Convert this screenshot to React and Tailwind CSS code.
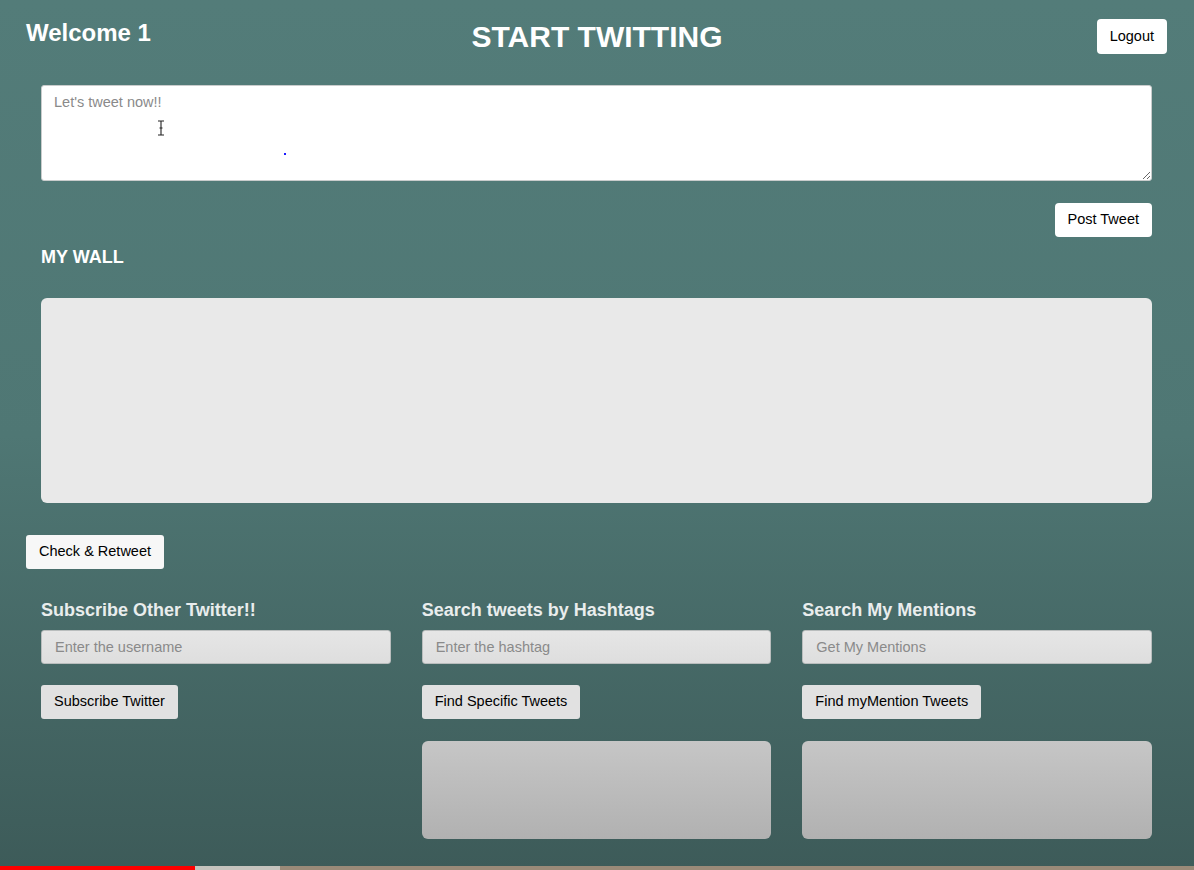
import React from 'react';

const Column = ({ title, placeholder, button, showResults }) => {
    return (
        <div className="flex flex-col">
            <h3 className="text-lg leading-7 font-bold text-[#e9eded]">{title}</h3>
            <input
                type="text"
                placeholder={placeholder}
                className="mt-[6px] h-[34px] w-full rounded-[3px] border border-[#b9bdbd] bg-linear-to-b from-[#e6e6e6] to-[#dedede] px-[13px] text-[14.5px] text-black outline-none placeholder:text-[#8a8a8a]"
            />
            <div className="mt-[21px]">
                <button className="h-[34px] rounded-[3px] bg-[#e1e1e1] px-[13px] text-[14.5px] text-black">
                    {button}
                </button>
            </div>
            {showResults && (
                <div className="mt-[22px] h-[98px] rounded-md bg-linear-to-b from-[#c6c6c6] to-[#b1b1b1]" />
            )}
        </div>
    );
};

const App = () => {
    return (
        <div className="relative min-h-screen overflow-hidden bg-linear-to-b from-[#537c79] via-[#4f7774] to-[#3d5b59] px-[26px] font-['Liberation_Sans',Arial,sans-serif]">
            {/* header */}
            <header className="mt-[19px] grid h-[35px] grid-cols-[1fr_auto_1fr] items-center">
                <h2 className="self-start text-2xl leading-7 font-bold text-white">Welcome 1</h2>
                <h1 className="text-[30px] leading-[35px] font-bold text-white">START TWITTING</h1>
                <div className="flex justify-end pr-[1px]">
                    <button className="h-[35px] rounded-[4px] bg-white px-[13px] text-[14.5px] text-black">
                        Logout
                    </button>
                </div>
            </header>

            <div className="pl-[15px] pr-[16px]">
                <div className="relative mt-[31px]">
                    <textarea
                        placeholder="Let's tweet now!!"
                        className="block h-[96px] w-full rounded-[3px] border border-[#c9cccc] bg-white px-[12px] py-[6px] text-[14.5px] text-black outline-none placeholder:text-[#8a8a8a]"
                    />
                    {/* mouse cursor + stray dot */}
                    <svg className="pointer-events-none absolute left-[115px] top-[35px]" width="10" height="16" viewBox="0 0 10 16">
                        <path d="M2 1h2.5c.4 0 .5.3.5.6V14.4c0 .3.1.6.5.6H8M8 1H5.5c-.4 0-.5.3-.5.6M5 14.4c0 .3-.1.6-.5.6H2M3.5 8h3" fill="none" stroke="#222" strokeWidth="1.1" />
                    </svg>
                    <span className="pointer-events-none absolute left-[243px] top-[68px] h-[2px] w-[2px] bg-[#1a1aff]" />
                </div>

                <div className="mt-[22px] flex justify-end">
                    <button className="h-[34px] rounded-[4px] bg-white px-[13px] text-[14.5px] text-black">
                        Post Tweet
                    </button>
                </div>

                <h2 className="mt-[6px] text-lg leading-7 font-bold text-white">MY WALL</h2>
                <div className="mt-[27px] h-[205px] rounded-md bg-[#e9e9e9]" />
            </div>

            <div className="mt-[32px]">
                <button className="h-[34px] rounded-[3px] bg-[#f7f7f7] px-[13px] text-[14.5px] text-black">
                    Check &amp; Retweet
                </button>
            </div>

            <div className="mt-[27px] grid grid-cols-3 gap-x-[31px] pl-[15px] pr-[16px]">
                <Column title="Subscribe Other Twitter!!" placeholder="Enter the username" button="Subscribe Twitter" />
                <Column title="Search tweets by Hashtags" placeholder="Enter the hashtag" button="Find Specific Tweets" showResults />
                <Column title="Search My Mentions" placeholder="Get My Mentions" button="Find myMention Tweets" showResults />
            </div>

            {/* video progress bar */}
            <div className="absolute bottom-0 left-0 right-0 flex h-[4px]">
                <div className="w-[195px] bg-[#ff0000]" />
                <div className="w-[85px] bg-[#c5c3bd]" />
                <div className="flex-1 bg-[#9a8a78]" />
            </div>
        </div>
    );
};

export default App;
